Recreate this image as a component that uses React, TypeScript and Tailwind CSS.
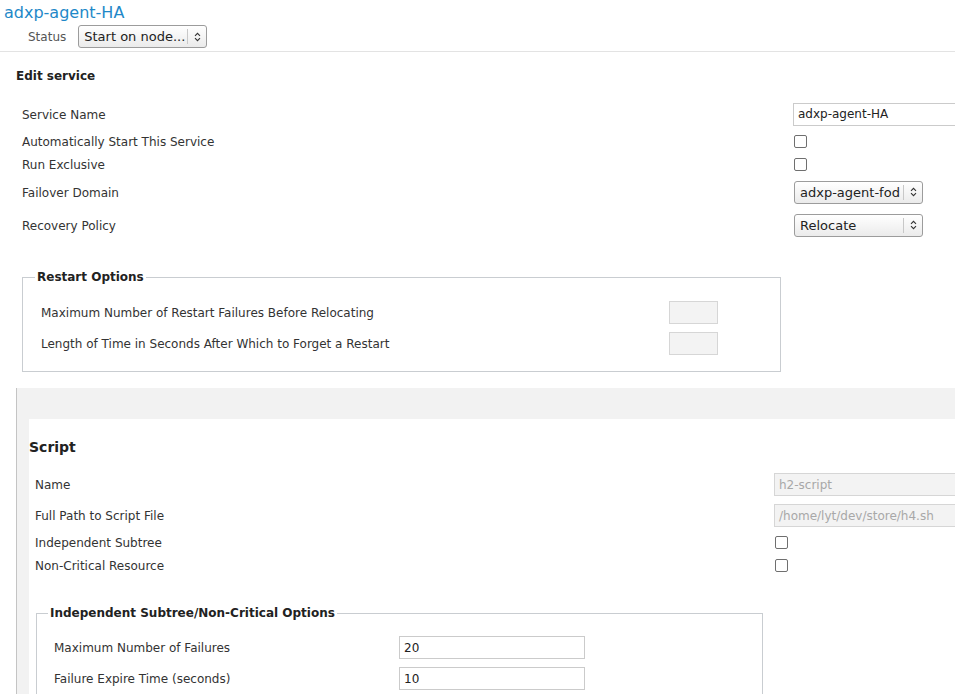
function Chevrons() {
  return (
    <svg width="7" height="10" viewBox="0 0 7 10" fill="none" stroke="#333" strokeWidth="1.1">
      <path d="M1 3.8 L3.5 1.3 L6 3.8" />
      <path d="M1 6.2 L3.5 8.7 L6 6.2" />
    </svg>
  );
}

function Select({ value }: { value: string }) {
  return (
    <div className="flex h-[23px] w-[129px] shrink-0 items-center rounded-[3px] border border-[#9c9c9c] bg-linear-to-b from-white to-[#ebebeb] text-[13px] text-[#222]">
      <span className="flex-1 overflow-hidden whitespace-nowrap pl-[5px] leading-[21px]">{value}</span>
      <span className="h-[15px] w-px bg-[#c8c8c8]" />
      <span className="flex w-[18px] justify-center">
        <Chevrons />
      </span>
    </div>
  );
}

function Checkbox() {
  return <span className="ml-[1px] block h-[13px] w-[13px] shrink-0 rounded-[2px] border border-[#6f6f6f] bg-white" />;
}

function TextInput({ value, width, disabled }: { value: string; width: string; disabled?: boolean }) {
  return (
    <div
      className={`flex h-[23px] shrink-0 items-center border pl-[4px] text-[12px] whitespace-nowrap ${width} ${
        disabled ? "border-[#d6d6d6] bg-[#f3f3f3] text-[#a8a8a8]" : "border-[#cbcbcb] bg-white text-[#222]"
      }`}
    >
      {value}
    </div>
  );
}

export default function App() {
  return (
    <div className="h-[694px] w-full overflow-hidden bg-white font-['DejaVu_Sans',sans-serif] text-[12px] text-[#333]">
      <header className="border-b border-[#e3e3e3] pt-[3px] pb-[3px] pl-[4px]">
        <div className="text-[16px] leading-[19px] text-[#1e88c8]">adxp-agent-HA</div>
        <div className="mt-[3px] flex items-center gap-[12px] pl-[24px]">
          <span className="text-[#555]">Status</span>
          <Select value="Start on node..." />
        </div>
      </header>

      <main className="pl-[16px]">
        <h2 className="mt-[17px] text-[12px] leading-[15px] font-bold text-[#222]">Edit service</h2>

        <div className="mt-[16px] flex flex-col">
          <div className="flex h-[28px] items-center pl-[6px]">
            <span className="w-[771px] shrink-0 pt-[2px]">Service Name</span>
            <TextInput value="adxp-agent-HA" width="w-[200px]" />
          </div>
          <div className="flex h-[26px] items-center pl-[6px]">
            <span className="w-[771px] shrink-0 pt-[2px]">Automatically Start This Service</span>
            <Checkbox />
          </div>
          <div className="flex h-[20px] items-center pl-[6px]">
            <span className="w-[771px] shrink-0 pt-[2px]">Run Exclusive</span>
            <Checkbox />
          </div>
          <div className="flex h-[36px] items-center pl-[6px]">
            <span className="w-[772px] shrink-0 pt-[2px]">Failover Domain</span>
            <Select value="adxp-agent-fod" />
          </div>
          <div className="flex h-[30px] items-center pl-[6px]">
            <span className="w-[772px] shrink-0 pt-[2px]">Recovery Policy</span>
            <Select value="Relocate" />
          </div>
        </div>

        <fieldset className="mt-[29px] ml-[6px] w-[759px] border border-[#c9cdd1] pb-[16px] pl-[12px]">
          <legend className="px-[2px] pt-[1px] text-[12px] leading-[15px] font-bold text-[#222]">Restart Options</legend>
          <div className="mt-[16px] flex h-[23px] items-center pl-[6px]">
            <span className="w-[628px] shrink-0">Maximum Number of Restart Failures Before Relocating</span>
            <TextInput value="" width="w-[49px]" disabled />
          </div>
          <div className="mt-[8px] flex h-[23px] items-center pl-[6px]">
            <span className="w-[628px] shrink-0">Length of Time in Seconds After Which to Forget a Restart</span>
            <TextInput value="" width="w-[49px]" disabled />
          </div>
        </fieldset>

        <section className="mt-[16px] border-l border-[#c4c4c4] bg-[#f2f2f2] pt-[31px] pl-[12px]">
          <div className="bg-white pt-[20px] pb-[40px]">
            <h3 className="text-[14px] leading-[17px] font-bold text-[#222]">Script</h3>

            <div className="mt-[17px] flex h-[23px] items-center pl-[6px]">
              <span className="w-[739px] shrink-0">Name</span>
              <TextInput value="h2-script" width="w-[200px]" disabled />
            </div>
            <div className="mt-[8px] flex h-[23px] items-center pl-[6px]">
              <span className="w-[739px] shrink-0">Full Path to Script File</span>
              <TextInput value="/home/lyt/dev/store/h4.sh" width="w-[200px]" disabled />
            </div>
            <div className="mt-[4px] flex h-[23px] items-center pl-[6px]">
              <span className="w-[739px] shrink-0">Independent Subtree</span>
              <Checkbox />
            </div>
            <div className="flex h-[23px] items-center pl-[6px]">
              <span className="w-[739px] shrink-0">Non-Critical Resource</span>
              <Checkbox />
            </div>

            <fieldset className="mt-[28px] ml-[7px] w-[727px] border border-[#c9cdd1] pb-[16px] pl-[11px]">
              <legend className="px-[2px] pt-[1px] text-[12px] leading-[15px] font-bold text-[#222]">
                Independent Subtree/Non-Critical Options
              </legend>
              <div className="mt-[15px] flex h-[23px] items-center pl-[6px]">
                <span className="w-[345px] shrink-0">Maximum Number of Failures</span>
                <TextInput value="20" width="w-[186px]" />
              </div>
              <div className="mt-[8px] flex h-[23px] items-center pl-[6px]">
                <span className="w-[345px] shrink-0">Failure Expire Time (seconds)</span>
                <TextInput value="10" width="w-[186px]" />
              </div>
            </fieldset>
          </div>
        </section>
      </main>
    </div>
  );
}
